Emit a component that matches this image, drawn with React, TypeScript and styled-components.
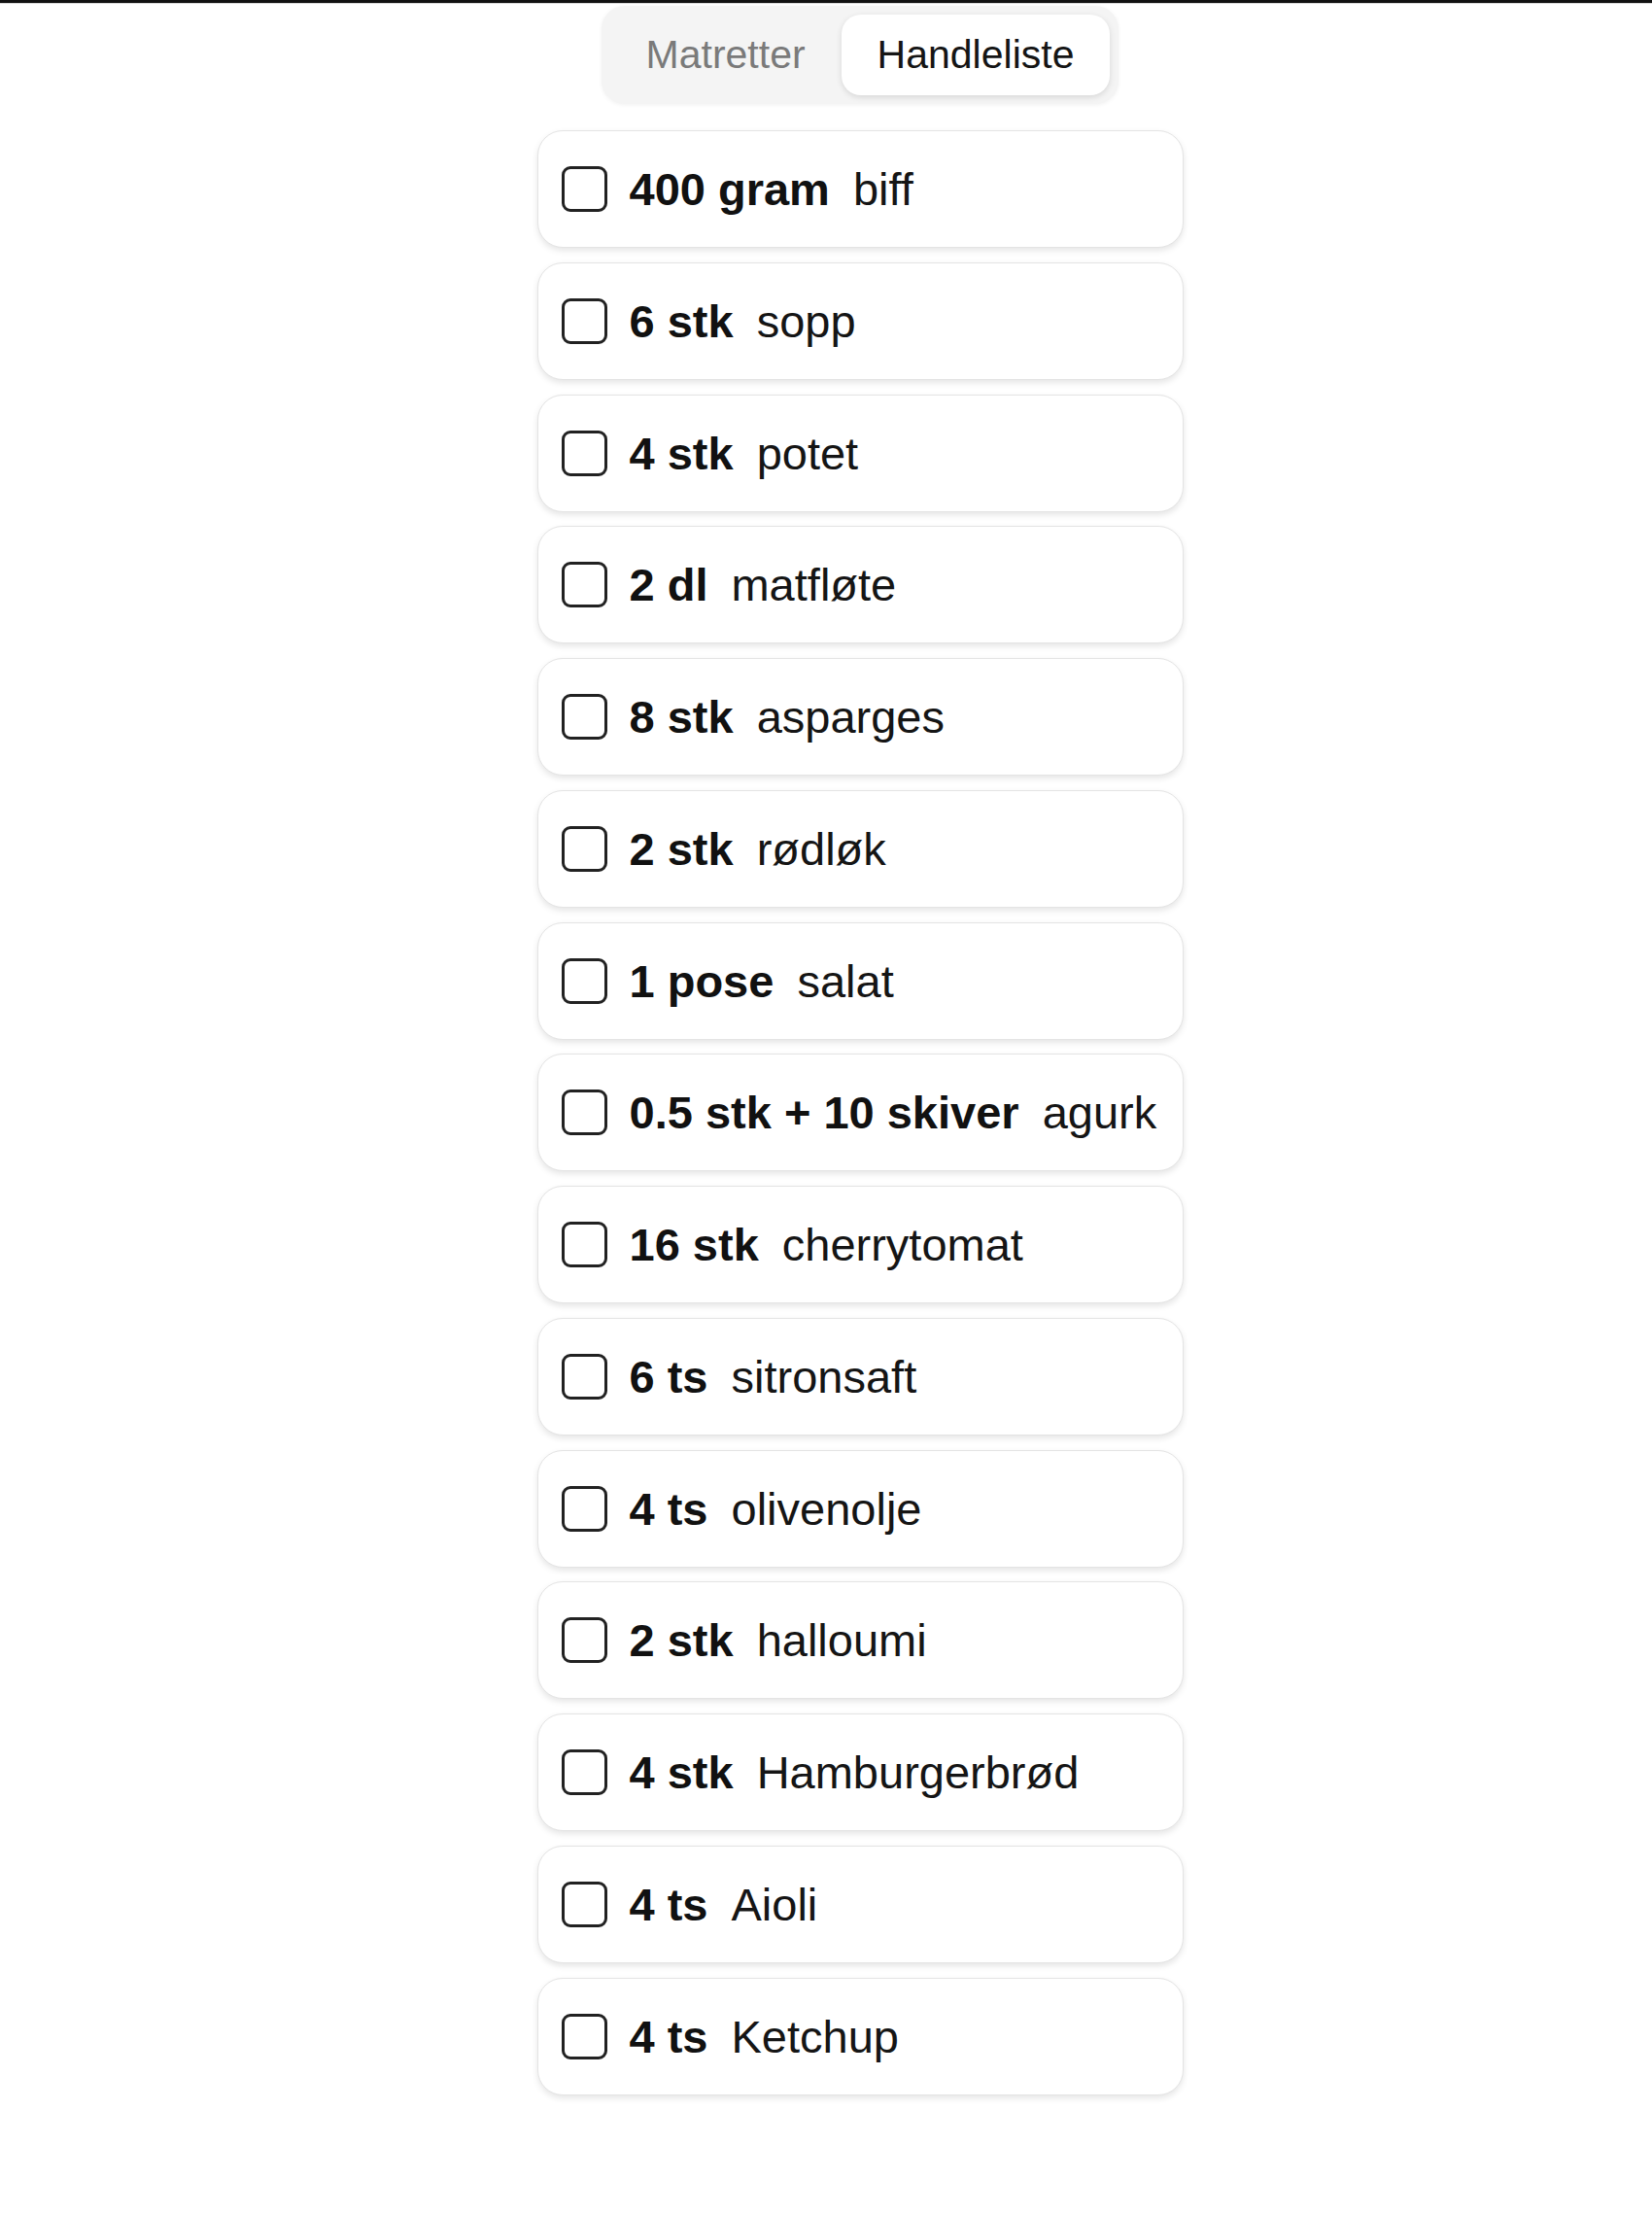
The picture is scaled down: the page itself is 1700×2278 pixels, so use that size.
import React from "react";
import styled, { createGlobalStyle } from "styled-components";

const GlobalStyle = createGlobalStyle`
  html, body {
    margin: 0;
    padding: 0;
    background: #ffffff;
    font-family: "Liberation Sans", Arial, Helvetica, sans-serif;
    color: #111111;
  }
  * { box-sizing: border-box; }
`;

const TopBar = styled.div`
  height: 4px;
  background: #111111;
  border-bottom: 1px solid #d8d8d8;
`;

const Page = styled.main`
  display: flex;
  flex-direction: column;
  align-items: center;
  padding: 2px 0 120px 70px;
`;

const Tabs = styled.div`
  display: flex;
  align-items: center;
  padding: 9px;
  background: #f4f4f4;
  border-radius: 24px;
  box-shadow: 0 1px 4px rgba(0, 0, 0, 0.06);
`;

const Tab = styled.button<{ $active?: boolean }>`
  border: none;
  font-family: inherit;
  font-size: 41px;
  line-height: 83px;
  height: 83px;
  padding: 0 37px;
  border-radius: 20px;
  cursor: pointer;
  color: ${(p) => (p.$active ? "#151515" : "#7a7a7a")};
  background: ${(p) => (p.$active ? "#ffffff" : "transparent")};
  box-shadow: ${(p) => (p.$active ? "0 2px 6px rgba(0, 0, 0, 0.12)" : "none")};
`;

const List = styled.ul`
  list-style: none;
  margin: 27px 0 0;
  padding: 0;
  width: 665px;
  display: flex;
  flex-direction: column;
  gap: 14.75px;
`;

const Item = styled.li`
  height: 121px;
  display: flex;
  align-items: center;
  gap: 23px;
  padding: 0 24px;
  background: #ffffff;
  border: 1.5px solid #e4e4e4;
  border-radius: 26px;
  box-shadow: 0 3px 6px rgba(0, 0, 0, 0.1);
`;

const Check = styled.input`
  appearance: none;
  -webkit-appearance: none;
  margin: 0;
  flex: 0 0 auto;
  width: 47px;
  height: 47px;
  border: 3px solid #222222;
  border-radius: 9px;
  background: #ffffff;
  cursor: pointer;
`;

const Label = styled.span`
  display: flex;
  align-items: baseline;
  gap: 24px;
  font-size: 47px;
  line-height: 1;
  white-space: nowrap;
`;

const Amount = styled.strong`
  font-weight: 700;
  color: #111111;
`;

const Name = styled.span`
  font-weight: 400;
  color: #151515;
`;

const items: [string, string][] = [
  ["400 gram", "biff"],
  ["6 stk", "sopp"],
  ["4 stk", "potet"],
  ["2 dl", "matfløte"],
  ["8 stk", "asparges"],
  ["2 stk", "rødløk"],
  ["1 pose", "salat"],
  ["0.5 stk + 10 skiver", "agurk"],
  ["16 stk", "cherrytomat"],
  ["6 ts", "sitronsaft"],
  ["4 ts", "olivenolje"],
  ["2 stk", "halloumi"],
  ["4 stk", "Hamburgerbrød"],
  ["4 ts", "Aioli"],
  ["4 ts", "Ketchup"],
];

export default function App() {
  return (
    <>
      <GlobalStyle />
      <TopBar />
      <Page>
        <Tabs>
          <Tab>Matretter</Tab>
          <Tab $active>Handleliste</Tab>
        </Tabs>
        <List>
          {items.map(([amount, name], i) => (
            <Item key={i}>
              <Check type="checkbox" aria-label={name} />
              <Label>
                <Amount>{amount}</Amount>
                <Name>{name}</Name>
              </Label>
            </Item>
          ))}
        </List>
      </Page>
    </>
  );
}
